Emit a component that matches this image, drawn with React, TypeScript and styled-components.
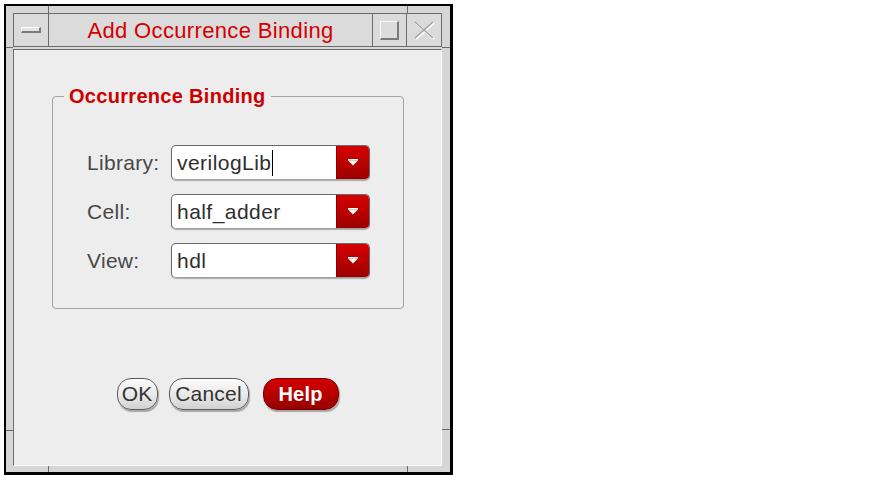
import React from "react";
import styled, { createGlobalStyle, css } from "styled-components";

const Global = createGlobalStyle`
  html, body { margin: 0; padding: 0; background: #ffffff; }
  body { font-family: "Liberation Sans", Arial, Helvetica, sans-serif; }
`;

const Window = styled.div`
  position: relative;
  box-sizing: border-box;
  margin: 4px 0 0 4px;
  width: 449px;
  height: 471px;
  border-style: solid;
  border-color: #000;
  border-width: 2px 3px 3px 2px;
  background: #d6d6d6;
  padding: 7px 8px 6px 7px;
  display: flex;
  flex-direction: column;
  gap: 2px;
`;

type Side = "top" | "bottom" | "left" | "right";

const Tick = styled.span<{ $side: Side; $at: number }>`
  position: absolute;
  background: #6c6c6c;
  ${({ $side, $at }) =>
    $side === "top"
      ? css`top: 0; left: ${$at}px; width: 1px; height: 7px;`
      : $side === "bottom"
      ? css`bottom: 0; left: ${$at}px; width: 1px; height: 6px;`
      : $side === "left"
      ? css`left: 0; top: ${$at}px; width: 7px; height: 1px;`
      : css`right: 0; top: ${$at}px; width: 8px; height: 1px;`}
`;

const TitleBar = styled.div`
  display: flex;
  flex: none;
  height: 34px;
  box-sizing: border-box;
  border: 1px solid #6c6c6c;
  background: #dbdbdb;
`;

const TitleBox = styled.div<{ $w: number; $edge: "left" | "right" }>`
  flex: none;
  width: ${(p) => p.$w}px;
  display: flex;
  align-items: center;
  justify-content: center;
  ${(p) =>
    p.$edge === "left"
      ? css`border-left: 1px solid #6c6c6c;`
      : css`border-right: 1px solid #6c6c6c;`}
`;

const MinGlyph = styled.span`
  display: block;
  width: 20px;
  height: 6px;
  box-sizing: border-box;
  background: #e4e4e4;
  border-style: solid;
  border-width: 1px 2px 2px 1px;
  border-color: #ffffff #7a7a7a #7a7a7a #ffffff;
`;

const MaxGlyph = styled.span`
  display: block;
  width: 19px;
  height: 19px;
  box-sizing: border-box;
  background: #dcdcdc;
  border-style: solid;
  border-width: 1px 2px 2px 1px;
  border-color: #fafafa #7a7a7a #7a7a7a #fafafa;
`;

const Title = styled.div`
  flex: 1;
  display: flex;
  align-items: center;
  justify-content: center;
  color: #d40000;
  font-size: 22px;
  letter-spacing: 0.35px;
  padding-top: 1px;
`;

const Client = styled.div`
  flex: 1;
  display: flex;
  flex-direction: column;
  background: #ededed;
  border: 1px solid;
  border-color: #6c6c6c #fafafa #fafafa #6c6c6c;
  padding-top: 36px;
`;

const Group = styled.fieldset`
  margin: 0 0 0 38px;
  width: 352px;
  box-sizing: border-box;
  border: 1px solid #a2a2a2;
  border-radius: 4px;
  padding: 39px 0 30px 0;
  min-inline-size: 0;
`;

const Legend = styled.legend`
  margin-left: 11px;
  padding: 0 5px;
  font-weight: bold;
  font-size: 20px;
  line-height: 20px;
  color: #cc0000;
  letter-spacing: 0.3px;
`;

const Rows = styled.div`
  margin-left: 34px;
  display: grid;
  grid-template-columns: 84px 199px;
  row-gap: 14px;
  align-items: center;
`;

const Label = styled.div`
  font-size: 21px;
  color: #474747;
  letter-spacing: 0.3px;
`;

const Combo = styled.div`
  display: flex;
  height: 35px;
  box-sizing: border-box;
  border-radius: 5px;
  border: 1px solid #6a6a6a;
  border-bottom-color: #a0a0a0;
  background: #ffffff;
  overflow: hidden;
  box-shadow: 0 1px 1px rgba(0, 0, 0, 0.28);
`;

const ComboText = styled.div`
  flex: 1;
  display: flex;
  align-items: center;
  padding-left: 5px;
  font-size: 21px;
  color: #2e2e2e;
  letter-spacing: 0.45px;
`;

const Caret = styled.span`
  display: inline-block;
  width: 1px;
  height: 26px;
  margin-left: 1px;
  background: #000;
`;

const ComboArrow = styled.div`
  flex: none;
  width: 32px;
  display: flex;
  align-items: center;
  justify-content: center;
  background: linear-gradient(#d60000, #b40000 60%, #9c0000);
  border-left: 1px solid #8a0000;
`;

const ButtonRow = styled.div`
  display: flex;
  justify-content: center;
  gap: 11px;
  margin-top: 69px;
`;

const Pill = styled.button<{ $w: number; $primary?: boolean; $gapBefore?: number }>`
  width: ${(p) => p.$w}px;
  height: 32px;
  box-sizing: border-box;
  padding: 0;
  margin-left: ${(p) => p.$gapBefore ?? 0}px;
  border-radius: 14px;
  border: 1px solid #5c5c5c;
  background: linear-gradient(#fcfcfc, #e2e2e2 70%, #d0d0d0);
  color: #333333;
  font-family: inherit;
  font-size: 21px;
  letter-spacing: 0.2px;
  box-shadow: 1px 2px 1px rgba(0, 0, 0, 0.3);
  ${(p) =>
    p.$primary &&
    css`
      background: linear-gradient(#d40000, #b00000 60%, #940000);
      border-color: #7a0000;
      color: #ffffff;
      font-weight: bold;
      font-size: 20px;
    `}
`;

const rows: { label: string; value: string; caret?: boolean }[] = [
  { label: "Library:", value: "verilogLib", caret: true },
  { label: "Cell:", value: "half_adder" },
  { label: "View:", value: "hdl" },
];

const DownArrow = () => (
  <svg width="10" height="7" viewBox="0 0 10 7">
    <rect x="0" y="0" width="10" height="1.5" fill="#ffffff" />
    <path d="M0 1.5 L10 1.5 L5 6.5 Z" fill="#ffffff" />
  </svg>
);

const CloseGlyph = () => (
  <svg width="22" height="20" viewBox="0 0 22 20">
    <path d="M2 2 L20 18 M20 2 L2 18" stroke="#ffffff" strokeWidth="2.2" transform="translate(1 1)" />
    <path d="M2 2 L20 18 M20 2 L2 18" stroke="#9a9a9a" strokeWidth="1.2" />
  </svg>
);

export default function App() {
  return (
    <>
      <Global />
      <Window>
        <Tick $side="top" $at={42} />
        <Tick $side="top" $at={401} />
        <Tick $side="bottom" $at={42} />
        <Tick $side="bottom" $at={401} />
        <Tick $side="left" $at={41} />
        <Tick $side="left" $at={424} />
        <Tick $side="right" $at={41} />
        <Tick $side="right" $at={423} />
        <TitleBar>
          <TitleBox $w={34} $edge="right">
            <MinGlyph />
          </TitleBox>
          <Title>Add Occurrence Binding</Title>
          <TitleBox $w={33} $edge="left">
            <MaxGlyph />
          </TitleBox>
          <TitleBox $w={34} $edge="left">
            <CloseGlyph />
          </TitleBox>
        </TitleBar>
        <Client>
          <Group>
            <Legend>Occurrence Binding</Legend>
            <Rows>
              {rows.map((r) => (
                <React.Fragment key={r.label}>
                  <Label>{r.label}</Label>
                  <Combo>
                    <ComboText>
                      {r.value}
                      {r.caret && <Caret />}
                    </ComboText>
                    <ComboArrow>
                      <DownArrow />
                    </ComboArrow>
                  </Combo>
                </React.Fragment>
              ))}
            </Rows>
          </Group>
          <ButtonRow>
            <Pill $w={41}>OK</Pill>
            <Pill $w={80}>Cancel</Pill>
            <Pill $w={76} $primary $gapBefore={3}>
              Help
            </Pill>
          </ButtonRow>
        </Client>
      </Window>
    </>
  );
}
